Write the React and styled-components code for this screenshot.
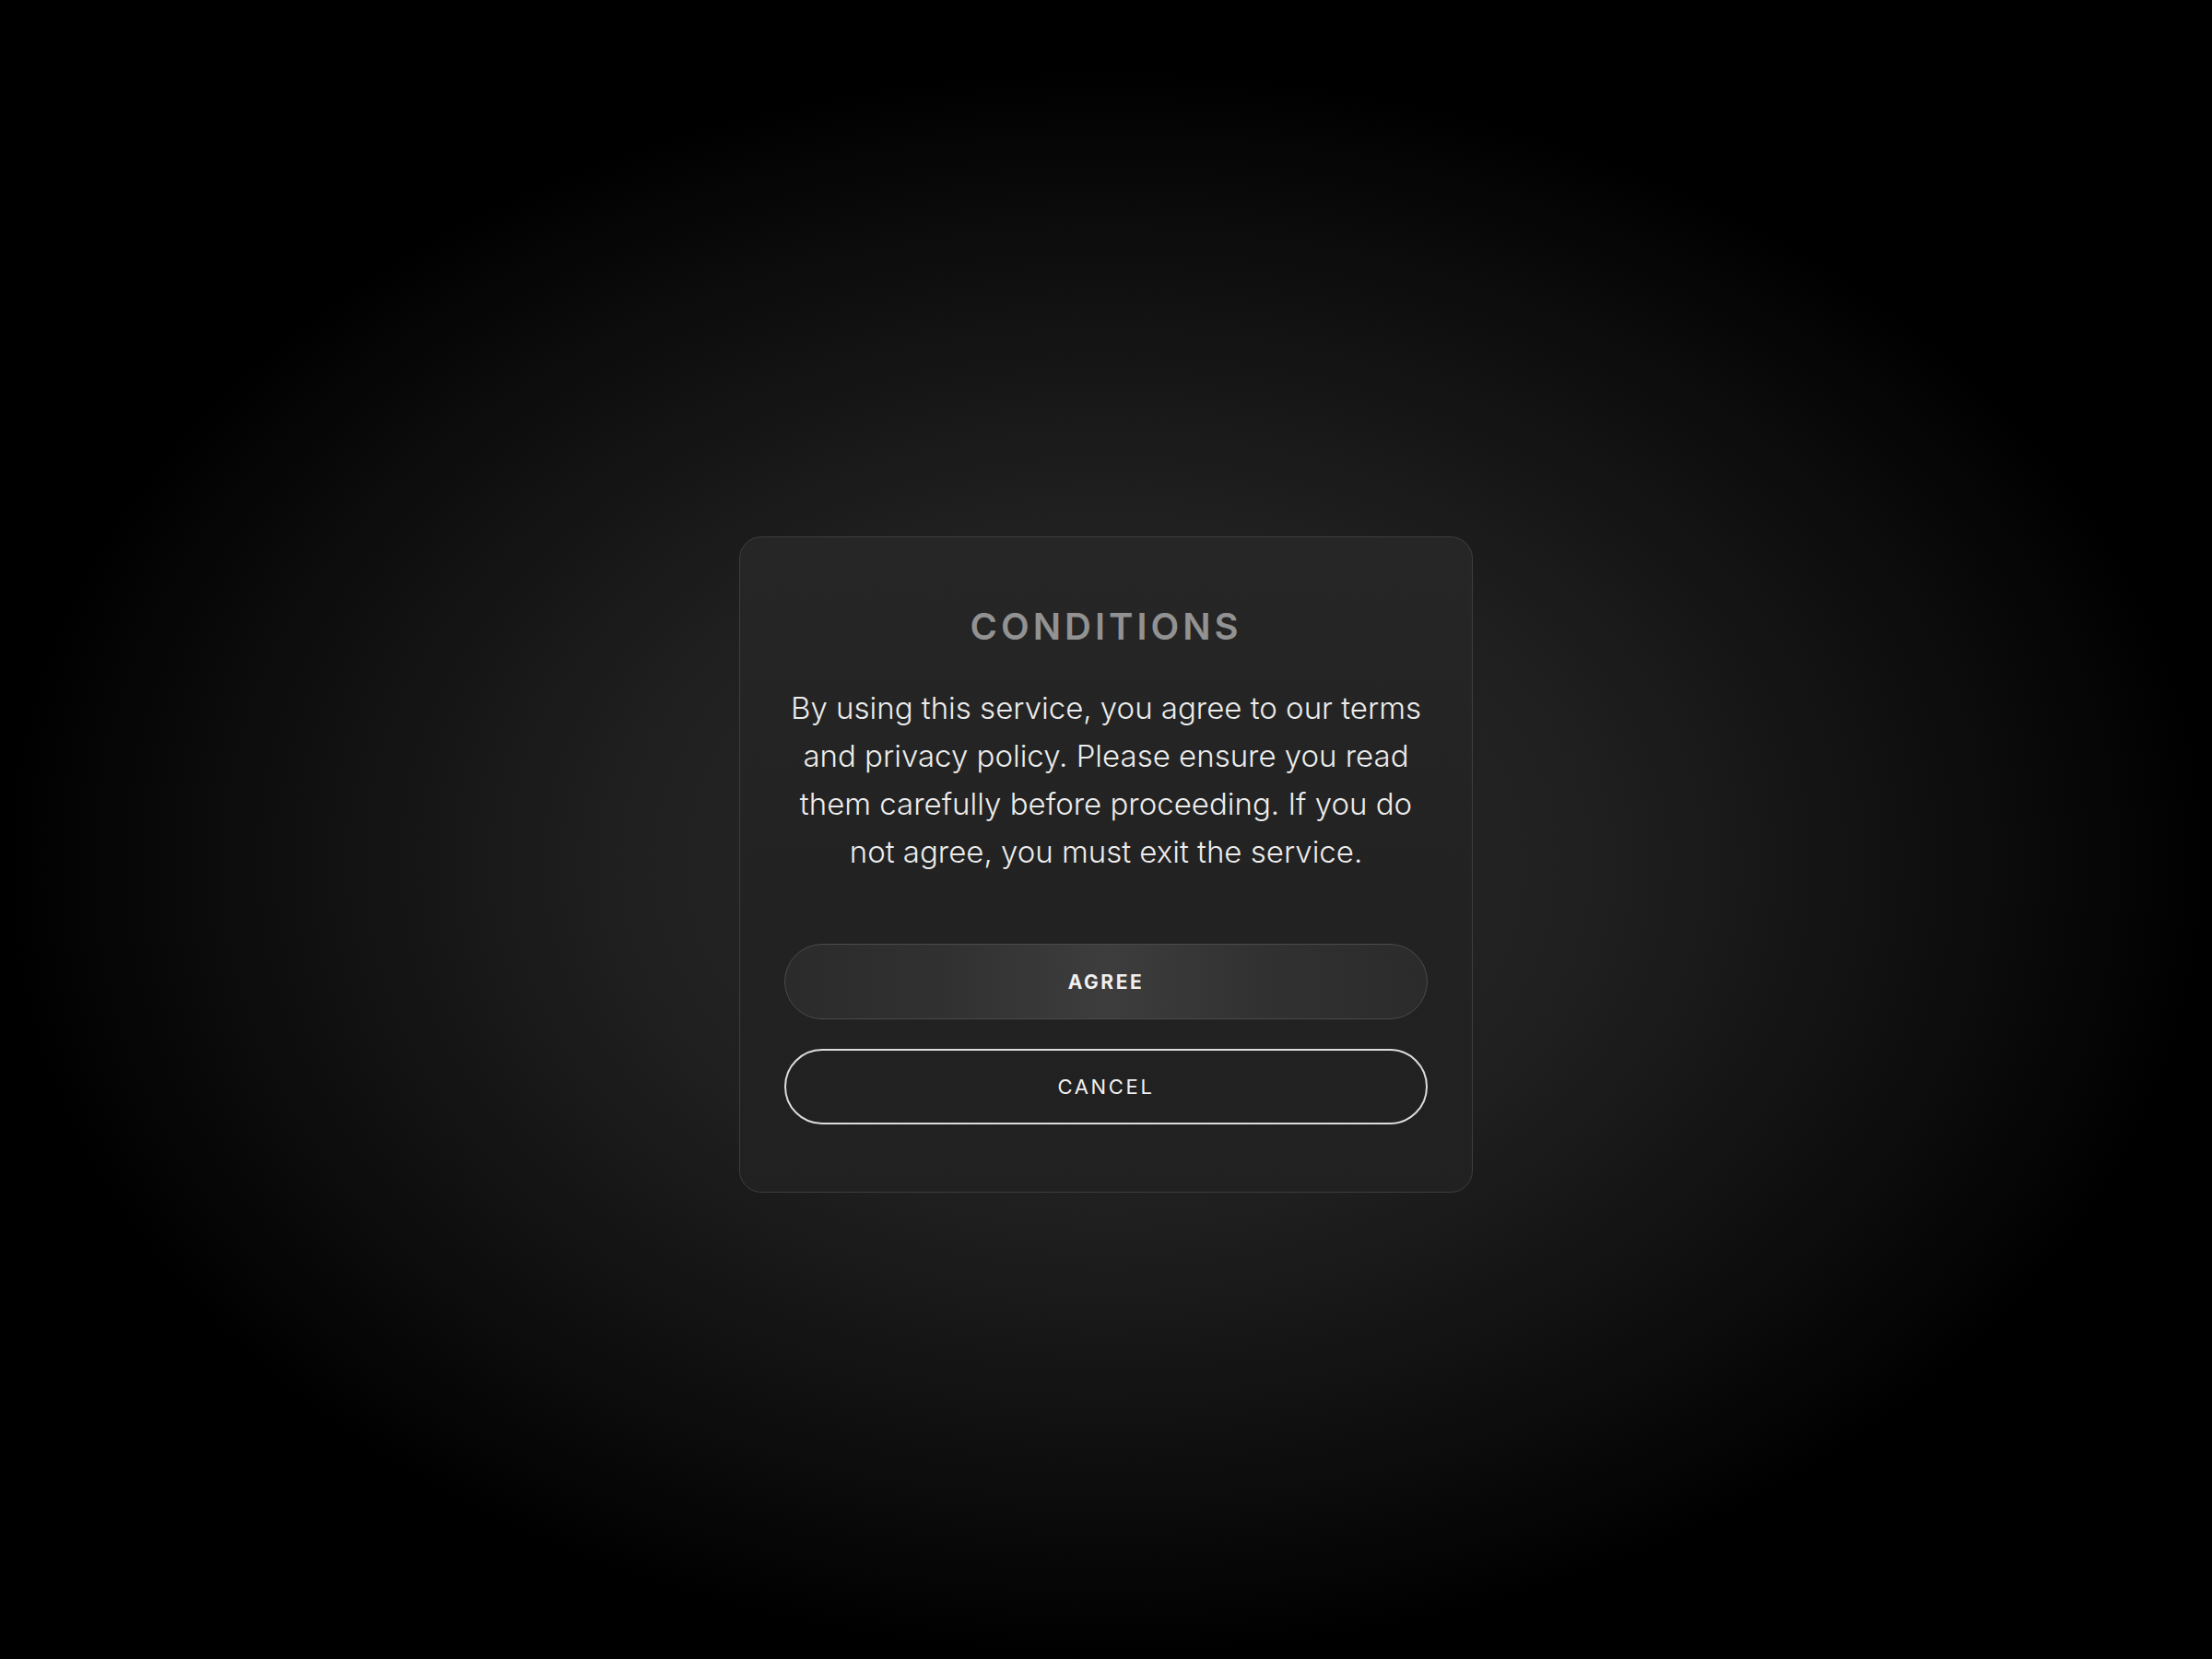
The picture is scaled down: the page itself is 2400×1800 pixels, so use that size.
import React from 'react';
import styled, { createGlobalStyle } from 'styled-components';

const GlobalStyle = createGlobalStyle`
  html, body {
    margin: 0;
    padding: 0;
    background: #000;
  }
  * {
    box-sizing: border-box;
  }
`;

const Page = styled.div`
  width: 100%;
  min-height: 1800px;
  display: flex;
  align-items: center;
  justify-content: center;
  padding-top: 76px;
  font-family: Inter, "Noto Sans", sans-serif;
  background: radial-gradient(ellipse closest-side at 50% 52%, #2c2c2c 0%, #1f1f1f 45%, #0c0c0c 80%, #000 100%);
`;

const Card = styled.div`
  width: 796px;
  padding: 76px 48px 73px;
  display: flex;
  flex-direction: column;
  align-items: center;
  background: linear-gradient(180deg, #262626 0%, #222 60%, #212121 100%);
  border: 1.5px solid #3d3d3d;
  border-radius: 24px;
`;

const Title = styled.h1`
  margin: 0;
  font-size: 40px;
  line-height: 42px;
  font-weight: 600;
  letter-spacing: 0.1em;
  text-transform: uppercase;
  color: #929292;
`;

const Text = styled.p`
  margin: 41px 0 0;
  font-size: 33px;
  line-height: 52px;
  font-weight: 300;
  text-align: center;
  color: #ececec;
`;

const Actions = styled.div`
  width: 100%;
  margin-top: 74px;
  display: flex;
  flex-direction: column;
  gap: 32px;
`;

const Button = styled.button`
  width: 100%;
  height: 82px;
  border-radius: 41px;
  font-family: Inter, "Noto Sans", sans-serif;
  text-transform: uppercase;
  color: #f0f0f0;
  cursor: pointer;
  font-size: ${p => (p.$primary ? '21px' : '22px')};
  font-weight: ${p => (p.$primary ? 700 : 400)};
  letter-spacing: ${p => (p.$primary ? '0.12em' : '0.12em')};
  border: ${p => (p.$primary ? '1.5px solid #4a4a4a' : '2px solid #dcdcdc')};
  background: ${p => (p.$primary
        ? 'linear-gradient(90deg, #2b2b2b 0%, #313131 25%, #3d3d3d 50%, #313131 75%, #2b2b2b 100%)'
        : 'transparent')};
`;

const App = () => {
    return (
        <>
            <GlobalStyle />
            <Page>
                <Card>
                    <Title>Conditions</Title>
                    <Text>
                        By using this service, you agree to our terms<br />
                        and privacy policy. Please ensure you read<br />
                        them carefully before proceeding. If you do<br />
                        not agree, you must exit the service.
                    </Text>
                    <Actions>
                        <Button $primary>Agree</Button>
                        <Button>Cancel</Button>
                    </Actions>
                </Card>
            </Page>
        </>
    );
}

export default App;
